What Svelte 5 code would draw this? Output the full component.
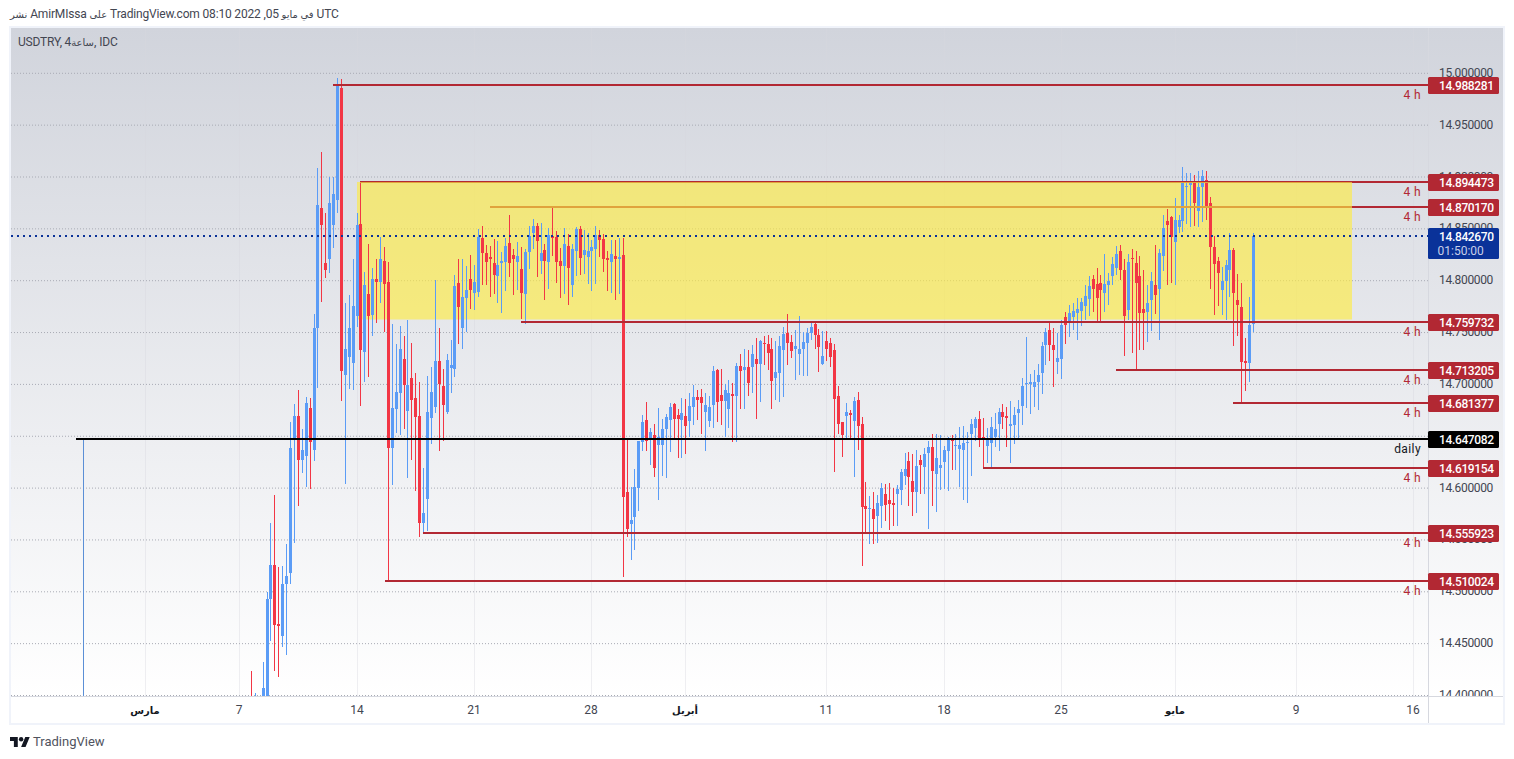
<script>
    // candles: [x, up, high, bodyTop, bodyBottom, low], y values in page pixels
    const candles = [
        [251,0,671,696,696,696],[255,1,693,696,696,696],[263,1,662,688,696,696],[267,1,592,599,696,696],
        [270,1,523,565,599,641],[274,0,495,565,625,671],[278,0,567,624,626,677],[282,1,566,584,636,647],
        [286,1,544,576,584,655],[290,1,422,448,573,584],[294,1,404,416,439,543],[298,0,390,416,460,506],
        [302,1,429,450,460,473],[306,1,397,403,456,487],[310,0,398,408,442,489],[314,1,314,328,450,461],
        [317,1,168,205,328,388],[321,0,152,208,225,302],[325,0,213,263,270,278],[329,1,177,203,259,273],
        [333,1,177,194,225,248],[337,1,78,86,200,213],[341,0,79,88,371,401],[345,1,303,349,375,484],
        [349,1,295,328,357,389],[353,1,259,306,363,390],[357,1,213,225,316,327],[360,0,181,224,350,406],
        [364,1,272,285,352,382],[368,0,244,294,316,377],[372,1,268,279,315,336],[376,0,259,279,282,323],
        [380,1,237,259,282,303],[384,0,247,261,284,332],[388,0,262,282,448,580],[392,1,324,408,448,485],
        [396,1,344,392,409,433],[400,1,326,349,393,435],[404,0,336,359,385,429],[407,1,320,385,411,478],
        [411,0,343,378,400,460],[415,0,373,398,417,491],[419,0,382,416,523,537],[423,1,468,513,523,534],
        [427,1,376,412,499,531],[431,1,367,392,418,444],[435,1,280,361,407,413],[439,0,328,361,384,451],
        [443,0,369,386,405,441],[447,1,354,360,412,414],[451,1,340,365,368,393],[454,1,275,286,369,377],
        [458,0,259,283,307,344],[462,1,259,297,328,349],[466,1,266,290,298,332],[470,0,255,279,290,309],
        [474,1,265,282,293,310],[478,1,229,237,292,297],[482,0,226,238,253,285],[486,0,245,253,262,285],
        [490,0,246,257,259,297],[494,0,239,263,275,294],[497,1,241,265,276,303],[501,1,252,261,263,313],
        [505,1,238,246,262,291],[509,0,215,243,263,277],[513,0,249,255,259,295],[517,1,242,256,262,290],
        [521,0,247,269,293,319],[525,1,249,252,294,324],[529,1,226,236,252,269],[533,1,219,226,233,249],
        [537,0,223,226,241,277],[541,1,223,253,261,274],[544,0,244,250,261,300],[548,1,228,235,262,289],
        [552,0,208,236,238,256],[556,0,231,237,262,283],[560,0,248,261,266,298],[564,1,228,244,266,294],
        [568,0,234,246,268,305],[572,1,244,249,285,297],[576,1,227,229,251,276],[580,0,226,229,258,275],
        [584,1,230,250,255,274],[588,1,233,251,257,284],[591,1,240,247,251,291],[595,1,226,235,249,284],
        [599,0,230,235,240,257],[603,0,234,239,259,272],[607,0,251,258,260,291],[611,1,240,254,262,293],
        [615,0,240,256,259,300],[619,1,238,257,259,294],[623,0,238,255,497,577],[627,0,439,492,529,537],
        [631,1,487,520,524,560],[634,1,469,487,517,550],[638,1,441,441,488,511],[642,1,415,422,442,451],
        [646,0,402,420,441,451],[650,1,428,432,438,465],[654,0,424,435,468,477],[658,1,408,437,445,500],
        [662,1,419,429,445,476],[666,1,414,417,429,478],[670,1,403,407,420,452],[674,0,403,404,419,439],
        [678,0,409,415,419,458],[681,1,398,413,420,458],[685,0,399,416,426,454],[689,1,393,406,421,437],
        [693,1,385,397,407,425],[697,0,390,397,400,420],[701,0,389,397,403,434],[705,1,393,405,412,451],
        [709,1,396,407,421,427],[713,1,366,371,405,428],[717,0,369,370,402,422],[721,0,369,395,401,425],
        [725,1,384,390,401,437],[728,1,380,393,409,428],[732,0,383,394,396,442],[736,1,363,366,396,442],
        [740,0,354,366,371,409],[744,1,349,367,370,409],[748,0,350,367,383,396],[752,1,345,354,367,393],
        [756,0,338,359,364,419],[760,1,340,341,364,402],[764,0,336,343,344,365],[768,0,335,344,353,370],
        [771,0,338,349,381,409],[775,1,341,372,378,400],[779,1,336,346,373,402],[783,1,327,334,350,397],
        [787,0,314,333,343,365],[791,0,335,342,351,358],[795,1,330,346,349,380],[799,1,316,349,354,375],
        [803,1,332,342,349,376],[807,1,328,333,343,376],[811,1,322,327,333,340],[815,0,322,324,335,349],
        [818,0,329,335,347,372],[822,1,331,356,364,365],[826,0,331,341,349,361],[830,0,338,343,357,367],
        [834,0,344,350,399,472],[838,0,386,396,424,434],[842,0,422,422,435,457],[846,1,403,412,416,440],
        [850,0,410,413,415,440],[854,1,397,401,421,477],[858,0,392,400,426,450],[862,0,417,424,507,566],
        [865,0,482,506,509,533],[869,1,496,508,509,544],[873,0,492,509,519,544],[877,1,495,503,516,543],
        [881,1,483,488,506,528],[885,0,484,494,505,521],[889,0,483,500,504,530],[893,0,488,503,505,526],
        [897,1,485,489,494,526],[901,1,469,472,490,505],[905,1,453,469,476,485],[908,0,452,461,477,506],
        [912,0,454,481,492,516],[916,1,450,466,492,513],[920,0,455,460,465,494],[924,1,448,454,467,494],
        [928,1,441,447,453,529],[932,0,434,447,471,506],[936,1,434,458,474,512],[940,1,435,465,468,490],
        [944,1,446,450,462,489],[948,1,437,438,451,491],[952,0,435,438,441,470],[955,1,434,445,446,470],
        [959,1,427,445,449,487],[963,1,426,443,450,500],[967,1,432,442,443,503],[971,1,419,424,434,476],
        [975,1,417,419,428,441],[979,0,411,419,438,447],[983,0,418,437,438,468],[987,1,428,440,446,463],
        [991,1,417,427,443,467],[995,1,413,429,437,447],[999,1,408,412,424,451],[1002,0,404,412,417,429],
        [1006,0,407,416,418,447],[1010,1,401,424,426,463],[1014,1,407,415,425,444],[1018,1,400,409,413,439],
        [1022,1,378,386,406,425],[1026,1,337,383,384,408],[1030,1,374,382,384,414],[1034,1,370,382,387,407],
        [1038,1,364,375,382,410],[1042,1,342,346,373,394],[1045,1,328,332,345,365],[1049,0,322,330,345,361],
        [1053,0,328,345,350,387],[1057,1,333,358,362,374],[1061,1,320,325,359,379],[1065,0,312,317,325,344],
        [1069,1,305,313,322,337],[1073,1,303,311,317,330],[1077,1,298,309,313,340],[1081,1,298,302,311,326],
        [1085,1,285,296,306,320],[1089,1,276,286,299,316],[1093,0,275,279,289,312],[1097,0,268,284,298,321],
        [1100,0,275,283,290,322],[1104,1,254,284,293,312],[1108,1,273,281,285,305],[1112,1,257,264,276,285],
        [1116,1,246,254,268,275],[1120,0,245,251,270,280],[1124,0,259,270,316,356],[1128,1,254,262,310,320],
        [1132,0,249,258,259,353],[1136,0,251,263,283,371],[1139,0,256,276,313,350],[1143,0,270,309,313,350],
        [1147,1,285,303,312,342],[1151,1,272,281,300,331],[1155,0,245,285,295,314],[1159,1,249,253,289,340],
        [1163,1,215,228,256,271],[1167,0,209,221,225,285],[1171,0,216,217,237,283],[1175,1,198,220,242,285],
        [1179,1,215,220,227,233],[1182,1,167,183,221,232],[1186,1,173,186,187,224],[1190,1,173,183,185,227],
        [1194,0,175,181,203,226],[1198,1,171,187,211,227],[1202,1,170,176,187,222],[1206,0,171,180,207,220],
        [1210,0,197,203,247,289],[1214,0,236,247,264,315],[1218,0,257,261,273,306],[1222,1,267,281,290,315],
        [1226,1,260,265,281,320],[1229,1,233,250,270,297],[1233,0,248,250,293,346],[1237,0,274,300,305,336],
        [1241,0,283,307,362,404],[1245,0,338,361,363,391],[1249,1,297,325,363,382],[1253,1,233,236,324,332],
    ];

    const prices = ["15.000000","14.950000","14.900000","14.850000","14.800000","14.750000","14.700000",
        "14.650000","14.600000","14.550000","14.500000","14.450000","14.400000"];
    const gridY = (i) => 73.3 + i * 51.85;

    const ticks = [
        { x: 145, text: "مارس", bold: true }, { x: 239, text: "7" }, { x: 357, text: "14" },
        { x: 474, text: "21" }, { x: 591, text: "28" }, { x: 685, text: "أبريل", bold: true },
        { x: 826, text: "11" }, { x: 944, text: "18" }, { x: 1061, text: "25" },
        { x: 1175, text: "مايو", bold: true }, { x: 1296, text: "9" }, { x: 1413, text: "16" },
    ];

    const levels = [
        { y: 85, x: 333, value: "14.988281" },
        { y: 182, x: 360, value: "14.894473" },
        { y: 207, x: 490, value: "14.870170" },
        { y: 322, x: 521, value: "14.759732" },
        { y: 370, x: 1116, value: "14.713205" },
        { y: 403, x: 1233, value: "14.681377" },
        { y: 468, x: 983, value: "14.619154" },
        { y: 533, x: 423, value: "14.555923" },
        { y: 581, x: 385, value: "14.510024" },
    ];
</script>

<div class="page">
    <div class="published"><span class="ar">نشر</span> AmirMIssa <span class="ar">على</span> TradingView.com 08:10 2022 ,05 <span class="ar">في مايو</span> UTC</div>

    <div class="chart">
        <svg width="1492" height="695" viewBox="11 28 1492 695" xmlns="http://www.w3.org/2000/svg">
            <defs>
                <linearGradient id="bg" x1="0" y1="0" x2="0" y2="1">
                    <stop offset="0" stop-color="#d1d4dc" />
                    <stop offset="1" stop-color="#ffffff" />
                </linearGradient>
                <clipPath id="plot"><rect x="11" y="28" width="1417" height="668" /></clipPath>
                <clipPath id="scale"><rect x="1429" y="28" width="74" height="668" /></clipPath>
            </defs>

            <rect x="11" y="28" width="1492" height="669" fill="url(#bg)" />

            {#each ticks as t}
                <line class="vgrid" x1={t.x + 0.5} x2={t.x + 0.5} y1="28" y2="696" />
            {/each}
            {#each prices as p, i}
                <line class="hgrid" x1="11" x2="1428" y1={gridY(i)} y2={gridY(i)} />
            {/each}

            <rect x="357" y="182" width="995" height="137.5" fill="#ffeb3b" fill-opacity="0.62" />

            <g clip-path="url(#plot)" shape-rendering="crispEdges">
                {#each candles as [x, up, high, top, bottom, low]}
                    <rect x={x} y={high} width="1" height={low - high} fill={up ? "#5b9cf6" : "#f23645"} />
                    <rect x={x - 1} y={top} width="3" height={Math.max(bottom - top, 1)} fill={up ? "#5b9cf6" : "#f23645"} />
                {/each}
            </g>

            <line x1="83.5" x2="83.5" y1="439" y2="696" stroke="#5b8fd6" />

            {#each levels as l}
                <line class="level" x1={l.x} x2="1428" y1={l.y} y2={l.y} />
                <text class="note red" x="1421" y={l.y + 14}>4 h</text>
            {/each}
            <line x1="360" x2="1352" y1="182.5" y2="182.5" stroke="#e0a33d" />
            <line x1="490" x2="1352" y1="207" y2="207" stroke="#e0a33d" stroke-width="2" />
            <line x1="76" x2="1428" y1="439" y2="439" stroke="#000" stroke-width="2" />
            <text class="note" x="1421" y="453">daily</text>
            <line x1="11" x2="1428" y1="236" y2="236" stroke="#0a3299" stroke-width="2" stroke-dasharray="2 4" />

            <!-- axes -->
            <line class="axis" x1="1428.5" x2="1428.5" y1="28" y2="723" />
            <line class="axis" x1="11" x2="1503" y1="696.5" y2="696.5" />

            <g clip-path="url(#scale)">
                {#each prices as p, i}
                    <text class="price" x="1439" y={gridY(i) + 3.5}>{p}</text>
                {/each}
            </g>
            {#each ticks as t}
                <text class="tick" class:bold={t.bold} x={t.x} y="714">{t.text}</text>
            {/each}

            {#each levels as l}
                <rect x="1428" y={l.y - 8} width="71" height="17" rx="1.5" fill="#b22833" />
                <text class="tag" x="1439" y={l.y + 4.5}>{l.value}</text>
            {/each}
            <rect x="1428" y="431" width="71" height="17" rx="1.5" fill="#000" />
            <text class="tag" x="1439" y="443.5">14.647082</text>
            <rect x="1428" y="228" width="71" height="31" rx="1.5" fill="#0a3299" />
            <text class="tag" x="1439" y="241">14.842670</text>
            <text class="tag timer" x="1437.5" y="255">01:50:00</text>
        </svg>

        <div class="legend">USDTRY, 4<span class="ar">ساعة</span>, IDC</div>
    </div>

    <div class="footer">
        <svg width="20" height="10" viewBox="0 4 36 18" xmlns="http://www.w3.org/2000/svg">
            <path d="M14 22H7V11H0V4h14v18zM28 22h-8l7.5-18h8L28 22z" fill="#131722" />
            <circle cx="20" cy="8" r="4" fill="#131722" />
        </svg>
        <span>TradingView</span>
    </div>
</div>

<style>
    :global(body) {
        margin: 0;
        background: #fff;
    }

    .page {
        width: 1514px;
        font-family: "Roboto", "DejaVu Sans", sans-serif;
    }

    .ar {
        font-size: 10px;
    }

    .published {
        height: 26px;
        padding-left: 10px;
        font-size: 12px;
        letter-spacing: -0.17px;
        line-height: 29px;
        color: #434651;
        white-space: nowrap;
    }

    .chart {
        position: relative;
        width: 1492px;
        height: 695px;
        margin-left: 9px;
        border: 2px solid #f0f3fa;
    }

    .chart > svg {
        display: block;
    }

    .legend {
        position: absolute;
        left: 7px;
        top: 6px;
        font-size: 12px;
        letter-spacing: -0.2px;
        line-height: 16px;
        color: #434651;
    }

    .footer {
        display: flex;
        align-items: center;
        gap: 3px;
        padding: 9px 0 0 10px;
        font-size: 13px;
        line-height: 16px;
        color: #50535e;
    }

    .vgrid {
        stroke: #d6d8df;
        stroke-opacity: 0.4;
    }

    .hgrid {
        stroke: #a8abb4;
        stroke-dasharray: 1 2;
    }

    .axis {
        stroke: #d6d8df;
    }

    .level {
        stroke: #b22833;
        stroke-width: 2;
    }

    .note {
        font-size: 12px;
        letter-spacing: 0.4px;
        text-anchor: end;
        fill: #131722;
    }

    .red {
        fill: #b22833;
    }

    .price {
        font-size: 12px;
        letter-spacing: -0.35px;
        fill: #434651;
    }

    .tick {
        font-size: 12px;
        text-anchor: middle;
        fill: #434651;
    }

    .tick.bold {
        font-size: 10px;
        font-weight: 700;
        fill: #131722;
    }

    .tag {
        font-size: 12px;
        font-weight: 500;
        letter-spacing: -0.35px;
        fill: #fff;
    }

    .timer {
        font-weight: 400;
        letter-spacing: 0;
        fill: #c8cfe8;
    }
</style>
